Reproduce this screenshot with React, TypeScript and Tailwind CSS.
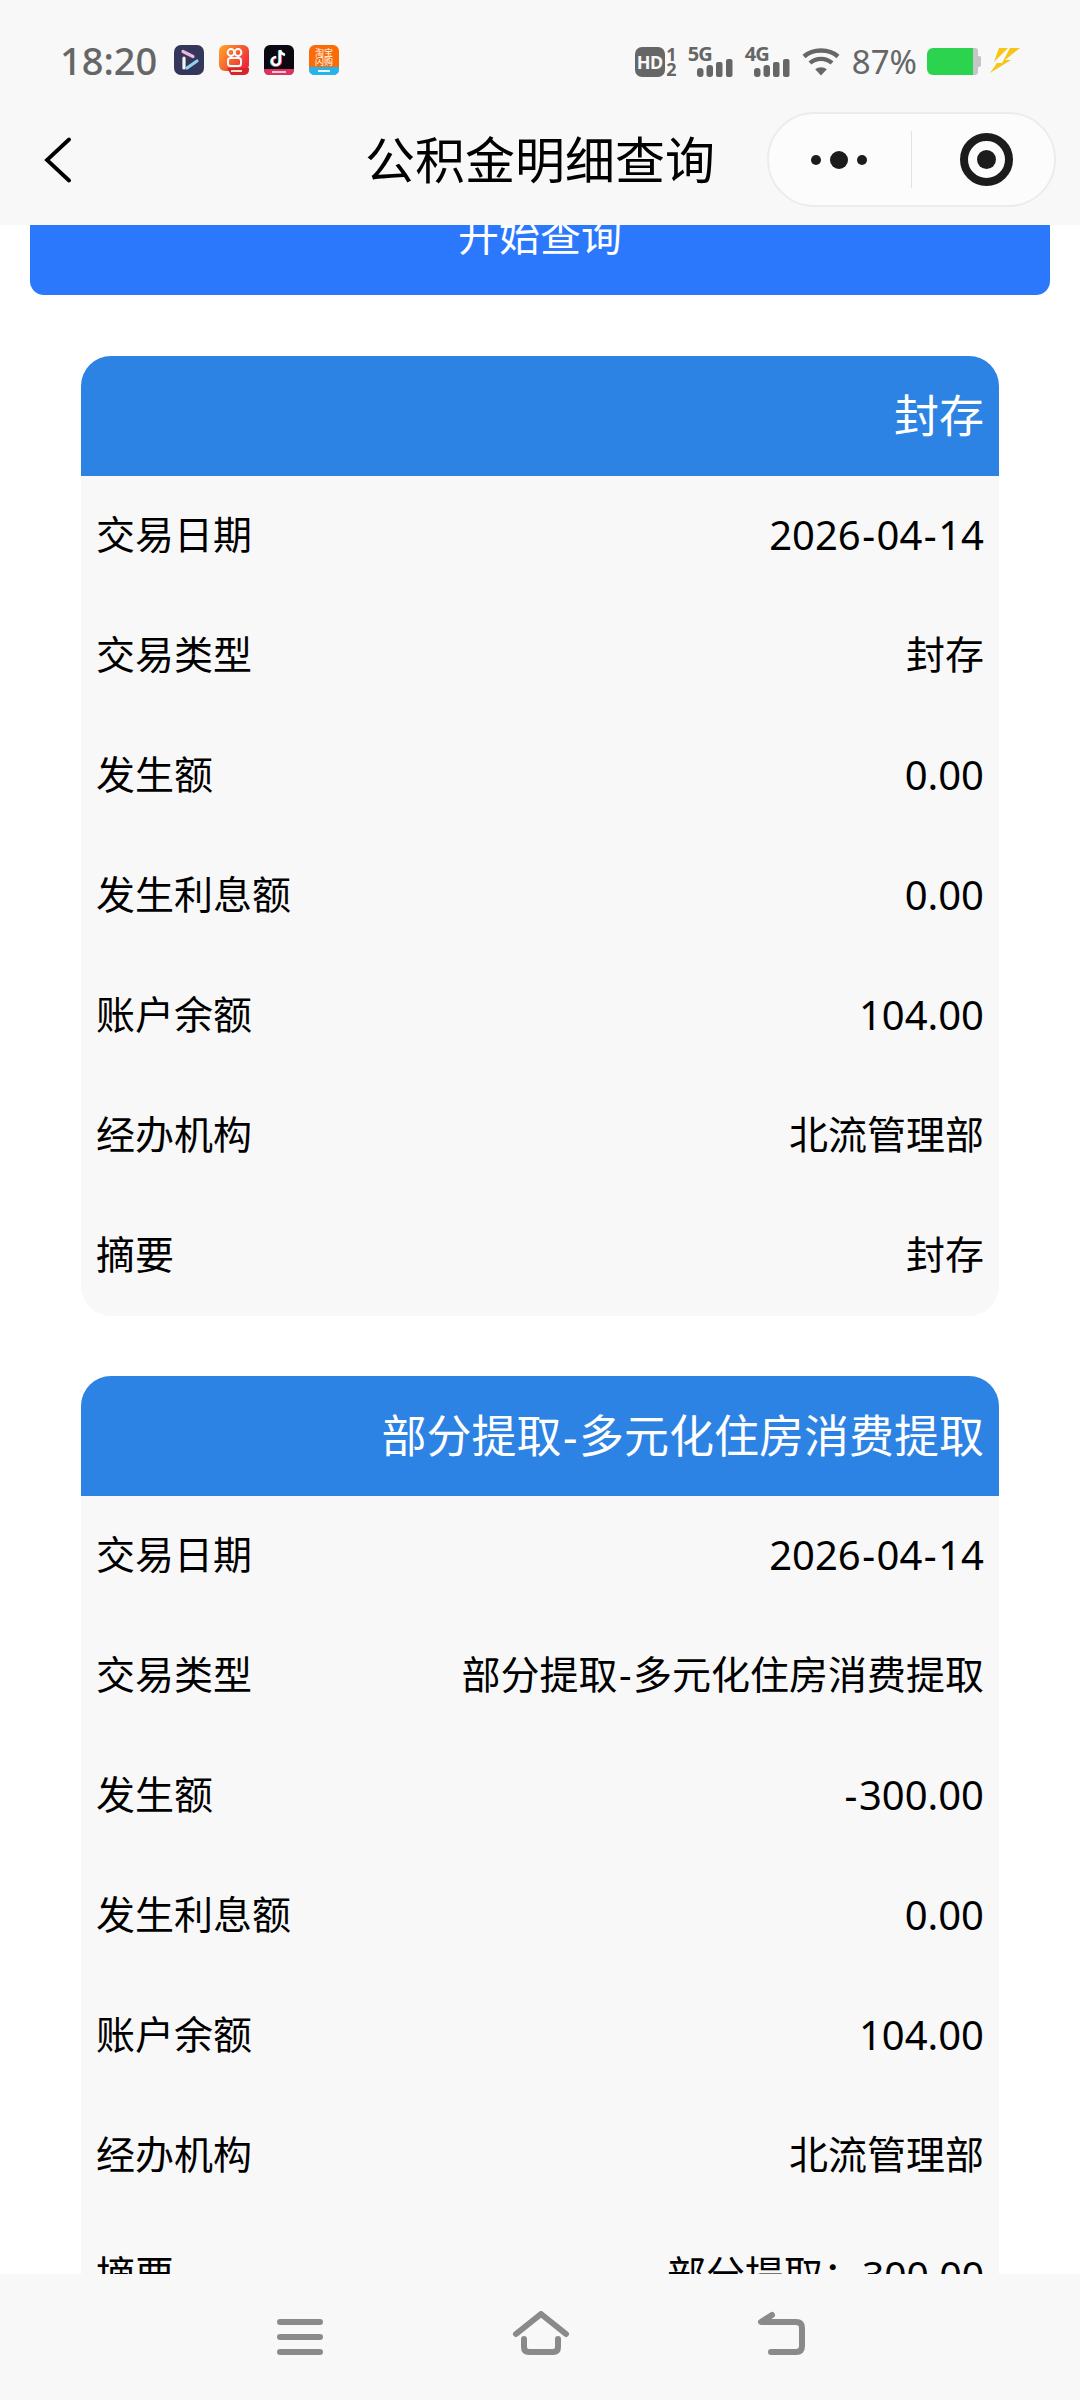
import React from "react";

const Signal = () => (
  <svg width="36" height="18" viewBox="0 0 36 18" fill="#666">
    <rect x="0" y="9" width="6.5" height="9" rx="3" />
    <rect x="9.5" y="6" width="6.5" height="12" rx="3" />
    <rect x="19" y="3" width="6.5" height="15" rx="2" />
    <rect x="29" y="0" width="6.5" height="18" rx="2" />
  </svg>
);

const Net = ({ label }: { label: string }) => (
  <div className="relative w-[45px] h-[30px]">
    <span className="absolute left-0 top-[-3px] text-[20px] leading-[20px] font-bold text-[#666] tracking-[-1px]">{label}</span>
    <div className="absolute right-0 bottom-0 flex">
      <Signal />
    </div>
  </div>
);

const AppIcons = () => (
  <div className="flex items-center gap-[15px] ml-[17px]">
    <svg width="30" height="30" viewBox="0 0 30 30">
      <rect width="30" height="30" rx="7" fill="#34365c" />
      <path d="M9 6.5 L19 11.5" stroke="#e9b9dc" strokeWidth="3.2" strokeLinecap="round" />
      <path d="M10 13 V23" stroke="#f4f4f8" strokeWidth="3.2" strokeLinecap="round" />
      <path d="M13 23 L23 16" stroke="#8fd3f0" strokeWidth="3.2" strokeLinecap="round" />
    </svg>
    <svg width="30" height="30" viewBox="0 0 30 30">
      <defs>
        <linearGradient id="ks" x1="0" y1="0" x2="1" y2="0.6">
          <stop offset="0" stopColor="#ffa726" />
          <stop offset="1" stopColor="#ec2d3a" />
        </linearGradient>
      </defs>
      <rect width="30" height="26" rx="6" fill="url(#ks)" />
      <path d="M8 23 H30 V25 Q30 30 24 30 H12 Z" fill="#d8242f" />
      <circle cx="12" cy="7.5" r="3.4" fill="none" stroke="#fff" strokeWidth="2" />
      <circle cx="19" cy="7.5" r="3.4" fill="none" stroke="#fff" strokeWidth="2" />
      <rect x="9" y="13" width="13" height="8" rx="2.5" fill="none" stroke="#fff" strokeWidth="2" />
      <rect x="12" y="25" width="11" height="2" fill="#fde1c0" />
    </svg>
    <svg width="30" height="30" viewBox="0 0 30 30">
      <rect width="30" height="30" rx="6" fill="#0c0812" />
      <path d="M0 24 H30 V25 Q30 30 25 30 H5 Q0 30 0 25 Z" fill="#d8345f" />
      <path d="M16 5 V16 A4 4 0 1 1 12 12" fill="none" stroke="#25e0df" strokeWidth="2.6" transform="translate(-0.8,0.5)" />
      <path d="M16 5 V16 A4 4 0 1 1 12 12" fill="none" stroke="#fe2c55" strokeWidth="2.6" transform="translate(0.8,0.5)" />
      <path d="M16 5 V16 A4 4 0 1 1 12 12 M16 5 Q17 9 21 10" fill="none" stroke="#fff" strokeWidth="2.4" />
      <rect x="8" y="26" width="14" height="2" fill="#f7c6d2" />
    </svg>
    <svg width="30" height="30" viewBox="0 0 30 30">
      <rect width="30" height="30" rx="6" fill="#f96c08" />
      <path d="M0 22 H30 V24 Q30 30 24 30 H6 Q0 30 0 24 Z" fill="#26b2ec" />
      <text x="15" y="11" textAnchor="middle" fontSize="9" fill="#fff" fontFamily="'Noto Sans CJK SC', sans-serif">淘宝</text>
      <text x="15" y="20" textAnchor="middle" fontSize="9" fill="#fff" fontFamily="'Noto Sans CJK SC', sans-serif">闪购</text>
      <rect x="9" y="25" width="12" height="2" fill="#e8f7ff" />
    </svg>
  </div>
);

const StatusRight = () => (
  <div className="flex items-center">
    <div className="w-[30px] h-[30px] rounded-[7px] bg-[#666] flex items-center justify-center text-[#f8f8f8] text-[18px] leading-none font-bold tracking-[-0.5px]">HD</div>
    <div className="w-[11px] ml-[1px] flex flex-col items-center text-[#666] text-[18px] leading-[15px] font-bold">
      <span>1</span>
      <span>2</span>
    </div>
    <div className="ml-[11px]"><Net label="5G" /></div>
    <div className="ml-[12px]"><Net label="4G" /></div>
    <svg className="ml-[12px]" width="38" height="28" viewBox="0 0 38 28" fill="none" stroke="#666" strokeWidth="4.4">
      <path d="M2 8.5 C11 0.5 27 0.5 36 8.5" />
      <path d="M8 15 C14 9.5 24 9.5 30 15" />
      <path d="M19 27.5 L13.2 21.2 C16.5 18.5 21.5 18.5 24.8 21.2 Z" fill="#666" stroke="none" />
    </svg>
    <span className="ml-[12px] text-[33px] leading-none text-[#666]">87%</span>
    <div className="ml-[10px] flex items-center">
      <div className="w-[46px] h-[27px] rounded-l-[6px] bg-[#2bd34f]" />
      <div className="w-[5px] h-[27px] rounded-r-[3px] bg-[#c6c6ca]" />
      <div className="w-[3px] h-[11px] rounded-r-[2px] bg-[#c6c6ca]" />
    </div>
    <svg className="ml-[9px] mt-[-2px]" width="30" height="25" viewBox="0 0 30 25" fill="#f6c516">
      <path d="M9 0 H18 L4 14 Z" />
      <path d="M20 0 H30 L15 12 H21 L0 25 L7 15 H12 Z" />
    </svg>
  </div>
);

// The hyphen in the reference's font is wider than Noto Sans's, so it gets a little room.
const Txt = ({ s }: { s: string }) => (
  <span className="whitespace-nowrap">
    {s.split("-").map((part, i) => (
      <React.Fragment key={i}>
        {i > 0 && <span className="mx-[1.5px]">-</span>}
        {part}
      </React.Fragment>
    ))}
  </span>
);

const Row = ({ k, v }: { k: string; v: string }) => (
  <div className="h-[120px] px-[15px] pb-[3px] flex items-center justify-between text-[39px] text-black">
    <span>{k}</span>
    <span className={/^[-\d.]+$/.test(v) ? "text-[40px]" : "text-[39px]"}>
      <Txt s={v} />
    </span>
  </div>
);

type Item = { title: string; rows: [string, string][] };

const items: Item[] = [
  {
    title: "封存",
    rows: [
      ["交易日期", "2026-04-14"],
      ["交易类型", "封存"],
      ["发生额", "0.00"],
      ["发生利息额", "0.00"],
      ["账户余额", "104.00"],
      ["经办机构", "北流管理部"],
      ["摘要", "封存"],
    ],
  },
  {
    title: "部分提取-多元化住房消费提取",
    rows: [
      ["交易日期", "2026-04-14"],
      ["交易类型", "部分提取-多元化住房消费提取"],
      ["发生额", "-300.00"],
      ["发生利息额", "0.00"],
      ["账户余额", "104.00"],
      ["经办机构", "北流管理部"],
      ["摘要", "部分提取：300.00"],
    ],
  },
];

const Card = ({ item }: { item: Item }) => (
  <section className="rounded-[30px] overflow-hidden bg-[#f8f8f8]">
    <div className="h-[120px] bg-[#2d83e4] px-[15px] flex items-center justify-end text-[45px] text-white">
      <Txt s={item.title} />
    </div>
    {item.rows.map(([k, v]) => (
      <Row key={k} k={k} v={v} />
    ))}
  </section>
);

export default function App() {
  return (
    <div className="w-[1080px] h-[2400px] bg-white flex flex-col overflow-hidden font-['Noto_Sans','Noto_Sans_CJK_SC',sans-serif]">
      <header className="h-[225px] shrink-0 bg-[#f8f8f8]">
        <div className="h-[112px] pt-[45px] pl-[60px] pr-[60px] flex items-start justify-between">
          <div className="flex items-center h-[30px]">
            <span className="w-[97px] text-[38px] leading-none font-medium text-[#666]">18:20</span>
            <AppIcons />
          </div>
          <StatusRight />
        </div>
        <div className="h-[95px] grid grid-cols-[1fr_auto_1fr] items-center">
          <div className="pl-[44px] flex">
            <svg width="28" height="46" viewBox="0 0 28 46" fill="none" stroke="#000" strokeWidth="3.8" strokeLinecap="round">
              <path d="M25 2.5 L3 23 L25 43.5" />
            </svg>
          </div>
          <h1 className="text-[50px] leading-none text-black font-normal pt-[1px]">公积金明细查询</h1>
          <div className="flex justify-end pr-[24px]">
            <div className="w-[289px] h-[95px] rounded-full bg-[#fcfcfc] border-2 border-[#ececec] flex items-center">
              <div className="w-[139px] mr-[3px] flex items-center justify-center gap-[9px]">
                <span className="w-[10px] h-[10px] rounded-full bg-[#1c1c1c]" />
                <span className="w-[18px] h-[18px] rounded-full bg-[#1c1c1c]" />
                <span className="w-[10px] h-[10px] rounded-full bg-[#1c1c1c]" />
              </div>
              <div className="w-[1px] h-[57px] bg-[#e2e2e2]" />
              <div className="flex-1 flex items-center justify-center pl-[6px]">
                <div className="w-[53px] h-[53px] rounded-full border-[8px] border-[#1c1c1c] flex items-center justify-center">
                  <span className="w-[19px] h-[19px] rounded-full bg-[#1c1c1c]" />
                </div>
              </div>
            </div>
          </div>
        </div>
      </header>

      <main className="flex-1 overflow-hidden">
        <div className="mt-[-48px]">
          <div className="mx-[30px] h-[118px] rounded-[14px] bg-[#2b78fd] flex items-center justify-center text-[41px] text-white">开始查询</div>
          <div className="mt-[61px] mx-[81px] flex flex-col gap-[60px]">
            {items.map((it) => (
              <Card key={it.title} item={it} />
            ))}
          </div>
        </div>
      </main>

      <footer className="h-[126px] shrink-0 bg-[#f8f8f8] pt-[37px] pl-[277px] flex items-start">
        <svg width="46" height="46" viewBox="0 0 46 46" fill="none" stroke="#8a8a8a" strokeWidth="6" strokeLinecap="round">
          <path d="M3 11 H43 M3 26 H43 M3 41 H43" />
        </svg>
        <svg className="ml-[189px]" width="58" height="46" viewBox="0 0 58 46" fill="none" stroke="#8a8a8a" strokeWidth="6" strokeLinecap="round" strokeLinejoin="round">
          <path d="M4 23 L29 3 L54 23" />
          <path d="M12 28 V36 Q12 41 17 41 H41 Q46 41 46 36 V28" />
        </svg>
        <svg className="ml-[188px]" width="50" height="46" viewBox="0 0 50 46" fill="none" stroke="#8a8a8a" strokeWidth="6" strokeLinecap="round" strokeLinejoin="round">
          <path d="M14 4 L3 11 H38 Q44 11 44 17 V35 Q44 41 38 41 H13" />
        </svg>
      </footer>
    </div>
  );
}
